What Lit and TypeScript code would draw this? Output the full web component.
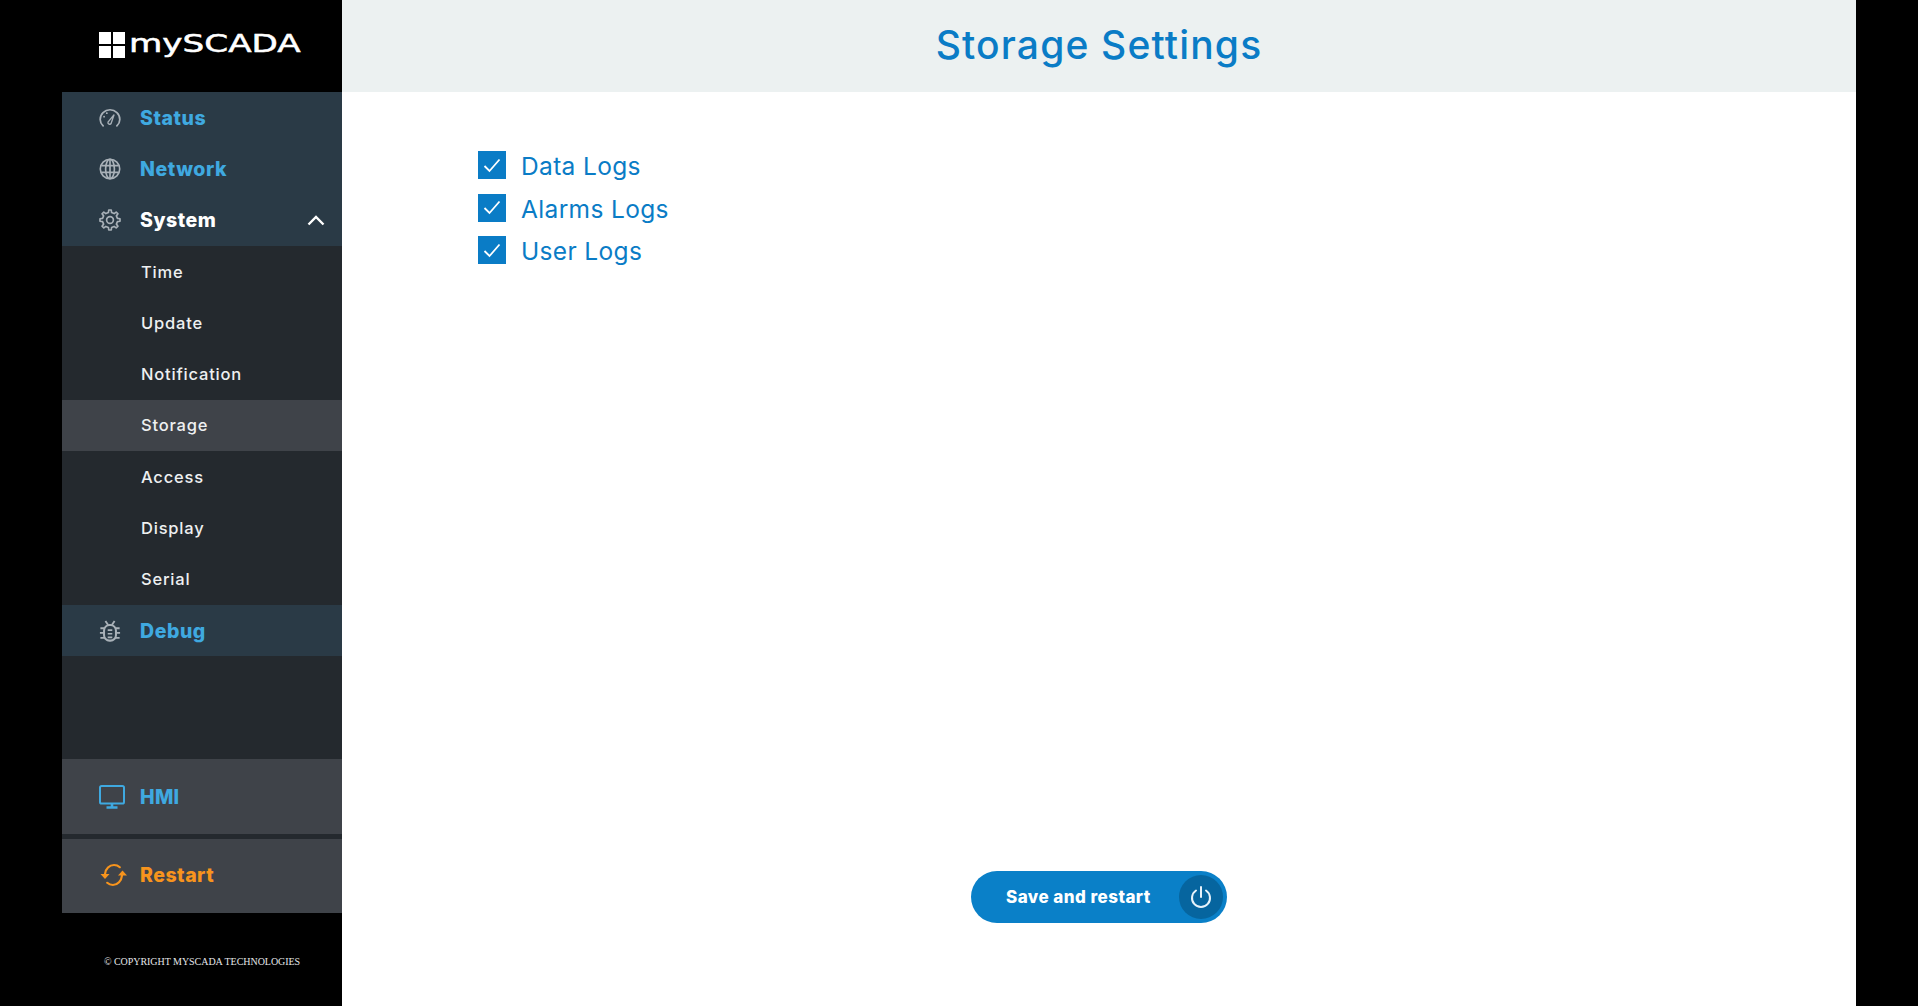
import { LitElement, html, css, svg } from "lit";
import { customElement } from "lit/decorators.js";

function gearPath(teeth: number, outer: number, inner: number) {
  const pts: string[] = [];
  const step = (Math.PI * 2) / teeth;
  for (let i = 0; i < teeth; i++) {
    const a = i * step - Math.PI / 2;
    const w = step * 0.2;
    const add = (r: number, t: number) => pts.push(`${(12 + r * Math.cos(t)).toFixed(2)} ${(12 + r * Math.sin(t)).toFixed(2)}`);
    add(inner, a - w * 1.35);
    add(outer, a - w * 0.8);
    add(outer, a + w * 0.8);
    add(inner, a + w * 1.35);
  }
  return "M" + pts.join("L") + "Z";
}

const icons = {
  gauge: svg`<svg class="ic" viewBox="0 0 24 24" fill="none" stroke="#a9b1b8" stroke-width="1.900" stroke-linecap="round"><path d="M4.500 20.500C2.400 18.500 1.300 16 1.300 13.500 1.300 7.600 6.100 3 12 3s10.700 4.600 10.700 10.500c0 2.500-1.100 5-3.200 7"/><path d="M9.800 16.500 16.500 8.300l-3.300 9.700a1.900 1.900 0 0 1-3.400-1.500z" stroke-width="1.500"/><path d="M5.500 10.500h.1M8.500 6.800h.1"/></svg>`,
  globe: svg`<svg class="ic" viewBox="0 0 24 24" fill="none" stroke="#a9b1b8" stroke-width="1.800"><circle cx="12" cy="12" r="10.600"/><ellipse cx="12" cy="12" rx="4.800" ry="10.600"/><path d="M2.500 8.300h19M2.500 15.700h19M12 1.500v21"/></svg>`,
  gear: svg`<svg class="ic" viewBox="0 0 24 24" fill="none" stroke="#a9b1b8" stroke-width="1.800" stroke-linejoin="round"><circle cx="12" cy="12" r="3.700"/><path d="${gearPath(8, 11, 8.300)}"/></svg>`,
  bug: svg`<svg class="ic" viewBox="0 0 24 24" fill="none" stroke="#a9b1b8" stroke-width="2.200"><rect x="5.500" y="5.500" width="13" height="17" rx="6"/><path d="M9.500 11h5M9.500 15h5M9.500 19h5" stroke-width="1.900"/><path d="M7 1l3 4.500M17 1l-3 4.500M1.500 9h4M22.500 9h-4M1 14h4.500M23 14h-4.500M1.500 19.500h4.500M22.500 19.500H18" stroke-width="2"/></svg>`,
  monitor: svg`<svg class="ic2" viewBox="0 0 26 24" fill="none" stroke="#3fa9e0" stroke-width="2"><rect x="1" y="1" width="24" height="17.500" rx="1.600"/><path d="M13 18.500v3M7.500 22.500h11" stroke-width="2.600"/></svg>`,
  sync: svg`<svg class="ic3" viewBox="0 0 28 24" fill="none" stroke="#f7941d" stroke-width="2.200" stroke-linecap="round"><path d="M5.500 11C6 5.500 10 2 14.500 2c2.500 0 4.300.8 5.800 2.200"/><path d="M22.500 12.500c-.5 5.500-4.500 9.500-9 9.500-2.500 0-4.300-.8-5.800-2.200"/><path d="M1 11h9L5.500 16z" fill="#f7941d" stroke="none"/><path d="M27.500 12.500h-9L23 7.500z" fill="#f7941d" stroke="none"/></svg>`,
};

@customElement("app-root")
export class AppRoot extends LitElement {
  static styles = css`
    :host { display: block; height: 1006px; background: #000; font-family: Inter, "Liberation Sans", sans-serif; overflow: hidden; }
    .page { display: flex; height: 100%; padding: 0 62px; box-sizing: border-box; }
    .side { width: 280px; flex: none; background: #24292e; display: flex; flex-direction: column; }
    .logo { height: 92px; background: #000; display: flex; align-items: center; padding: 0 0 0 37px; gap: 4px; box-sizing: border-box; }
    .grid { display: grid; grid-template-columns: 12px 12px; grid-auto-rows: 12px; gap: 2px; margin-top: -2px; }
    .grid i { background: #fff; display: block; }
    .brand { color: #fff; font: 400 24px "DejaVu Sans", sans-serif; -webkit-text-stroke: .5px #fff; transform: scaleX(1.425); transform-origin: left center; margin-top: -5px; }
    .row { height: 51.3px; display: flex; align-items: center; padding-left: 37px; box-sizing: border-box; flex: none; }
    .top { background: #2a3a46; font-weight: 800; font-size: 19.500px; color: #3fa9e0; gap: 19px; letter-spacing: .55px; }
    .top.white { color: #fff; justify-content: flex-start; }
    .ic { width: 22px; height: 22px; flex: none; }
    .ic2 { width: 26px; height: 24px; flex: none; }
    .ic3 { width: 29px; height: 24px; flex: none; }
    .chev { width: 18px; height: 11px; margin-left: auto; margin-right: 17px; }
    .sub { font-weight: 500; font-size: 16.500px; color: #eef0f1; padding: 0 0 0 79px; letter-spacing: .8px; }
    .sub.on { background: #3f4349; }
    .spacer { flex: 1; }
    .big { background: #3f4349; height: 75px; display: flex; align-items: center; padding-left: 37px; gap: 15px; font-weight: 800; font-size: 19.500px; color: #3fa9e0; letter-spacing: .3px; flex: none; box-sizing: border-box; padding-top: 1px; }
    .big.r { color: #f7941d; margin-top: 5px; gap: 12px; height: 74px; padding-top: 0; padding-bottom: 2px; letter-spacing: .5px; }
    .foot { height: 93px; background: #000; flex: none; display: flex; align-items: center; justify-content: center; color: #e4e6e8; font: 10px "Liberation Serif", serif; white-space: nowrap; letter-spacing: -.04px; padding-top: 4px; box-sizing: border-box; }
    .main { flex: 1; background: #fff; display: flex; flex-direction: column; }
    .head { height: 92px; flex: none; background: #ecf1f1; display: flex; align-items: center; justify-content: center; color: #0a7cc6; font-size: 39px; font-weight: 500; letter-spacing: 1.150px; padding-bottom: 3px; box-sizing: border-box; }
    .checks { padding: 59px 0 0 136px; display: flex; flex-direction: column; }
    .check { height: 42.500px; display: flex; align-items: flex-start; gap: 15px; color: #0a7cc6; font-size: 24.500px; font-weight: 400; line-height: 30px; letter-spacing: .35px; }
    .box { width: 28px; height: 28px; background: #0a7cc6; display: flex; align-items: center; justify-content: center; flex: none; }
    .box svg { width: 18px; height: 15px; }
    .foot-main { margin-top: auto; padding-bottom: 83px; display: flex; justify-content: center; }
    .btn { width: 256px; height: 52px; border-radius: 26px; background: #0a80c8; display: flex; align-items: center; color: #fff; font-weight: 800; font-size: 17px; padding: 0 4px 0 35px; box-sizing: border-box; letter-spacing: .45px; }
    .pw { margin-left: auto; width: 44px; height: 44px; border-radius: 50%; background: #06659f; display: flex; align-items: center; justify-content: center; }
    .pw svg { width: 22px; height: 24px; }
  `;

  render() {
    const subs = ["Time", "Update", "Notification", "Storage", "Access", "Display", "Serial"];
    const checks = ["Data Logs", "Alarms Logs", "User Logs"];
    return html`<div class="page">
      <aside class="side">
        <div class="logo"><div class="grid"><i></i><i></i><i></i><i></i></div><div class="brand">mySCADA</div></div>
        <div class="row top">${icons.gauge}<span>Status</span></div>
        <div class="row top">${icons.globe}<span>Network</span></div>
        <div class="row top white">${icons.gear}<span>System</span>
          <svg class="chev" viewBox="0 0 18 11" fill="none" stroke="#fff" stroke-width="2.400"><path d="M1.500 9.500 9 2l7.500 7.500"/></svg>
        </div>
        ${subs.map((s) => html`<div class="row sub ${s === "Storage" ? "on" : ""}">${s}</div>`)}
        <div class="row top">${icons.bug}<span>Debug</span></div>
        <div class="spacer"></div>
        <div class="big">${icons.monitor}<span>HMI</span></div>
        <div class="big r">${icons.sync}<span>Restart</span></div>
        <div class="foot">© COPYRIGHT MYSCADA TECHNOLOGIES</div>
      </aside>
      <main class="main">
        <header class="head">Storage Settings</header>
        <div class="checks">
          ${checks.map((c) => html`<div class="check"><span class="box"><svg viewBox="0 0 18 15" fill="none" stroke="#fff" stroke-width="1.800"><path d="M1.500 8 6.500 13 16.500 1.500"/></svg></span><span>${c}</span></div>`)}
        </div>
        <div class="foot-main">
          <div class="btn"><span>Save and restart</span><span class="pw"><svg viewBox="0 0 22 24" fill="none" stroke="#e6f2fa" stroke-width="2" stroke-linecap="round"><path d="M11 2v10"/><path d="M6 5.500a9 9 0 1 0 10 0"/></svg></span></div>
        </div>
      </main>
    </div>`;
  }
}
